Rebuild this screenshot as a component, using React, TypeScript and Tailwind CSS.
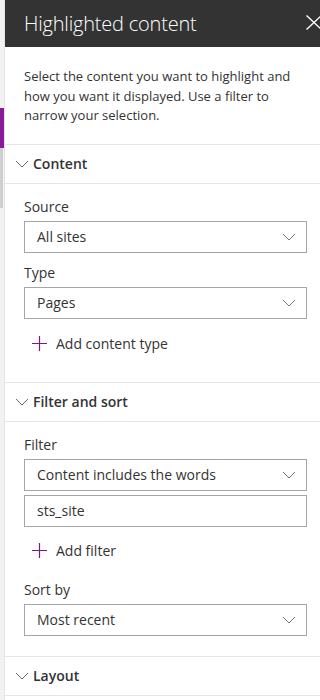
import React from 'react';

const font = { fontFamily: '"Open Sans", "Noto Sans", sans-serif' };

const Chevron: React.FC<{ className?: string }> = ({ className }) => (
  <svg width="14" height="8" viewBox="0 0 14 8" className={className} fill="none">
    <path d="M1 1l6 6 6-6" stroke="currentColor" strokeWidth="1" />
  </svg>
);

const Plus: React.FC = () => (
  <svg width="15" height="15" viewBox="0 0 15 15" fill="none">
    <path d="M7.5 0v15M0 7.5h15" stroke="#7a1a7e" strokeWidth="1.2" />
  </svg>
);

const SectionHeader: React.FC<{ title: string }> = ({ title }) => (
  <div className="flex items-center h-[40px] shrink-0 border-y border-[#e6e6e6] pl-[10px] gap-[4px]">
    <Chevron className="text-[#5b6b80]" />
    <span className="text-[14px] font-semibold text-[#333]">{title}</span>
  </div>
);

const Label: React.FC<{ children: React.ReactNode }> = ({ children }) => (
  <div className="text-[14px] text-[#333] leading-[20px] mb-[4px]">{children}</div>
);

const Dropdown: React.FC<{ value: string }> = ({ value }) => (
  <div className="flex items-center justify-between h-[32px] border border-[#a6a6a6] pl-[12px] pr-[10px]">
    <span className="text-[14px] text-[#333]">{value}</span>
    <Chevron className="text-[#777]" />
  </div>
);

const AddButton: React.FC<{ label: string }> = ({ label }) => (
  <div className="flex items-center gap-[9px] pl-[8px] h-[20px]">
    <Plus />
    <span className="text-[14px] text-[#333]">{label}</span>
  </div>
);

const App: React.FC = () => {
  return (
    <div className="flex w-[320px] h-[700px] overflow-hidden bg-white" style={font}>
      <div className="w-[4px] shrink-0 bg-[#f2f2f2] flex flex-col">
        <div className="h-[108px]" />
        <div className="h-[40px] bg-[#8a1a9b]" />
        <div className="h-[60px] w-[3px] bg-[#cfcfcf]" />
      </div>
      <div className="flex-1 flex flex-col border-l border-[#e4e4e4]">
        <div className="h-[47px] bg-[#333333] flex items-center justify-between pl-[19px] shrink-0">
          <span className="text-[20px] font-light text-white tracking-[-0.2px]">Highlighted content</span>
          <svg width="14" height="15" viewBox="0 0 14 15" fill="none" className="mb-[2px]">
            <path d="M0.5 0.5l15 14M15.5 0.5l-15 14" stroke="white" strokeWidth="1.4" />
          </svg>
        </div>
        <p className="px-[19px] pt-[20px] pb-[18px] text-[13px] leading-[19.5px] text-[#333]">
          Select the content you want to highlight and how you want it displayed. Use a filter to narrow your selection.
        </p>

        <SectionHeader title="Content" />
        <div className="pl-[19px] pr-[13px] pt-[13px] pb-[28px] flex flex-col">
          <Label>Source</Label>
          <Dropdown value="All sites" />
          <div className="h-[10px]" />
          <Label>Type</Label>
          <Dropdown value="Pages" />
          <div className="h-[15px]" />
          <AddButton label="Add content type" />
        </div>

        <SectionHeader title="Filter and sort" />
        <div className="pl-[19px] pr-[13px] pt-[13px] pb-[20px] flex flex-col">
          <Label>Filter</Label>
          <Dropdown value="Content includes the words" />
          <div className="h-[4px]" />
          <div className="flex items-center h-[32px] border border-[#a6a6a6] pl-[12px]">
            <span className="text-[14px] text-[#333]">sts_site</span>
          </div>
          <div className="h-[14px]" />
          <AddButton label="Add filter" />
          <div className="h-[19px]" />
          <Label>Sort by</Label>
          <Dropdown value="Most recent" />
        </div>

        <SectionHeader title="Layout" />
      </div>
    </div>
  );
};

export default App;
